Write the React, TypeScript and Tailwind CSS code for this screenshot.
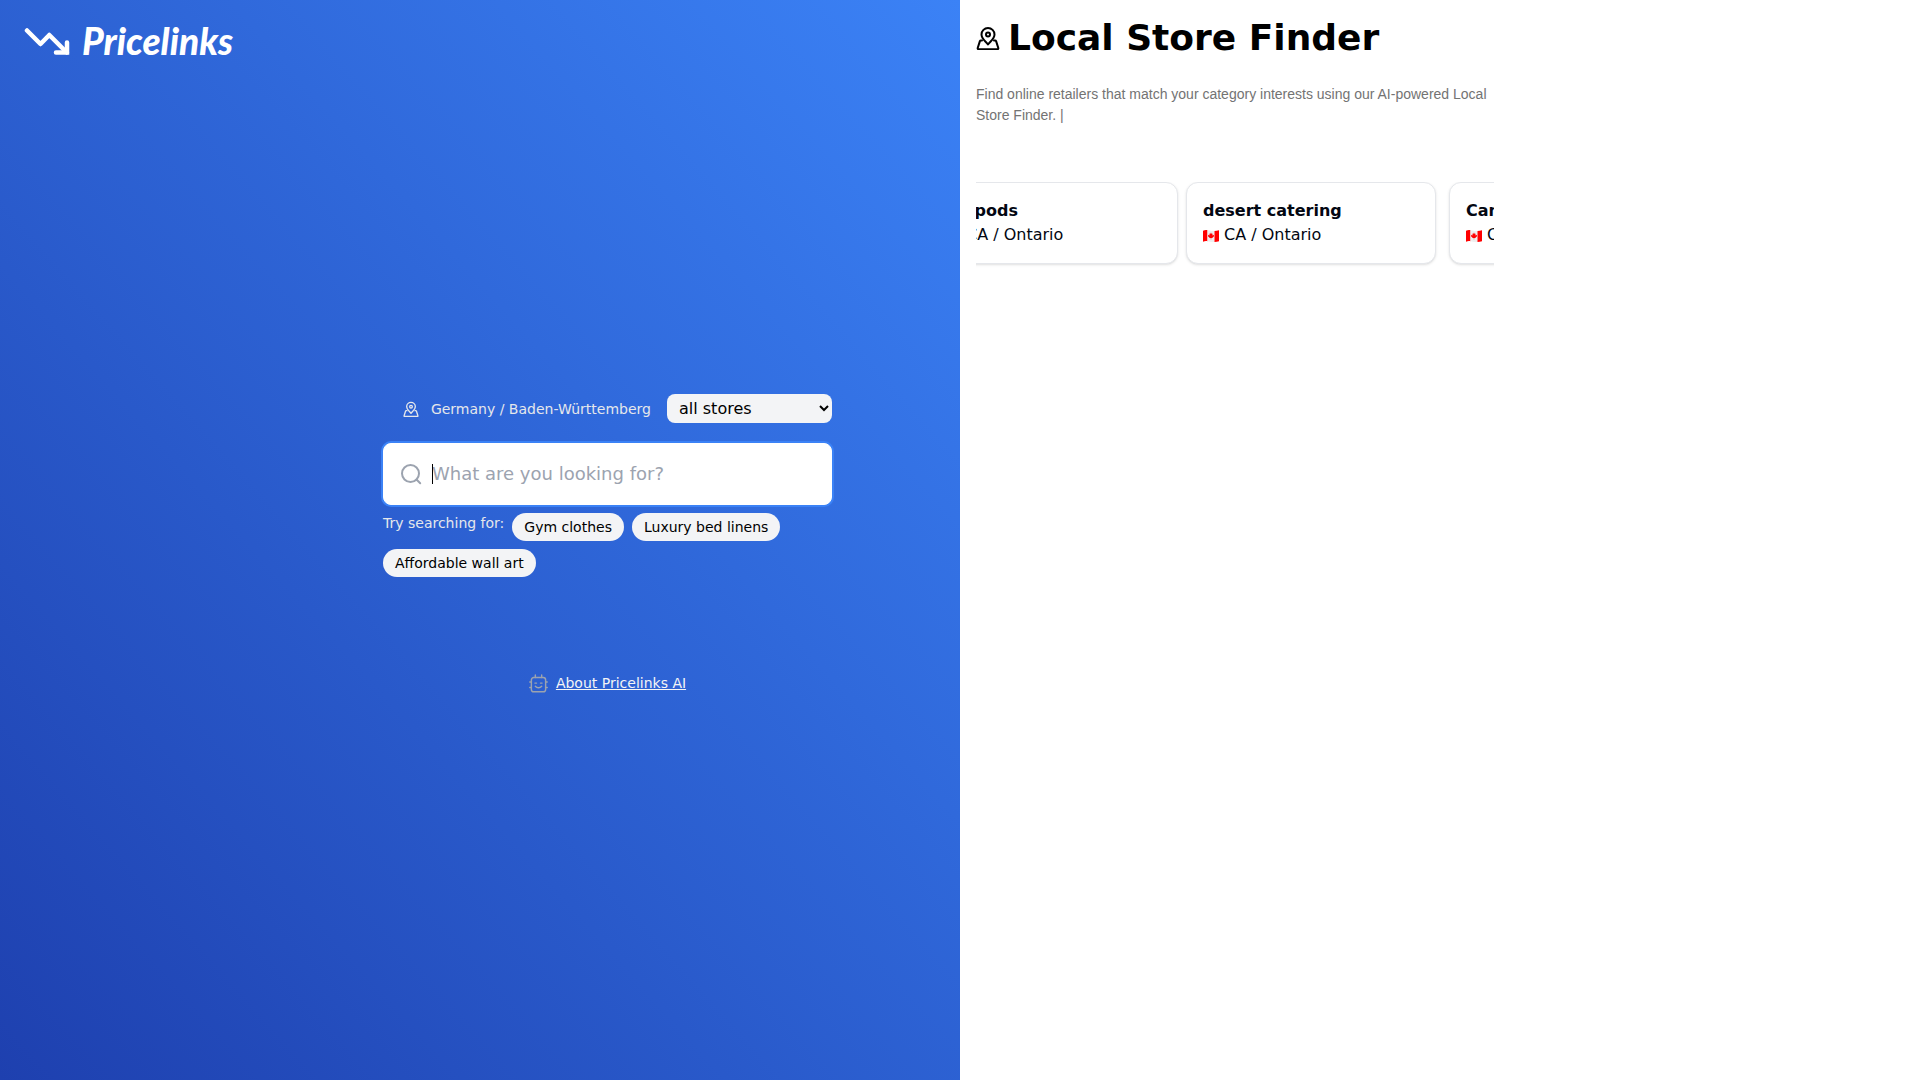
import { useState } from 'react';

interface Store {
  name: string;
  location: string;
  spacing: string;
}

const suggestions = ['Gym clothes', 'Luxury bed linens', 'Affordable wall art'];

const stores: Store[] = [
  { name: 'Earpods', location: 'CA / Ontario', spacing: 'mr-2' },
  { name: 'desert catering', location: 'CA / Ontario', spacing: 'mr-[13px]' },
  { name: 'Canada Goods', location: 'CA / Ontario', spacing: '' },
];

function MapPinIcon({ className }: { className: string }) {
  return (
    <svg
      viewBox="0 0 24 24"
      fill="none"
      stroke="currentColor"
      strokeWidth="2"
      strokeLinecap="round"
      strokeLinejoin="round"
      className={className}
      aria-hidden="true"
    >
      <path d="M12 18.500c-2-3-6.500-5.500-6.500-10a6.500 6.500 0 0 1 13 0c0 4.500-4.500 7-6.500 10z" />
      <circle cx="12" cy="8.500" r="2" />
      <path d="M6 14.500H4.800a1 1 0 0 0-.9.6L1.700 22a1 1 0 0 0 .9 1.300h18.800a1 1 0 0 0 .9-1.300l-2.200-6.900a1 1 0 0 0-.9-.6H18" />
    </svg>
  );
}

function SearchIcon({ className }: { className: string }) {
  return (
    <svg
      viewBox="0 0 24 24"
      fill="none"
      stroke="currentColor"
      strokeWidth="2"
      strokeLinecap="round"
      className={className}
      aria-hidden="true"
    >
      <circle cx="10.5" cy="11.5" r="8.5" />
      <path d="M16.500 17.500l3.700 3.700" />
    </svg>
  );
}

function RobotIcon({ className }: { className: string }) {
  return (
    <svg
      viewBox="0 0 24 24"
      fill="none"
      stroke="currentColor"
      strokeWidth="1.8"
      strokeLinecap="round"
      strokeLinejoin="round"
      className={className}
      aria-hidden="true"
    >
      <rect x="3" y="4.5" width="18" height="18" rx="3" />
      <path d="M8 4.500V1.200M16 4.500V1.200M3 10H1M3 17H1M21 10h2M21 17h2" />
      <path d="M7.500 11.500h2M14.500 11.500h2M8 15.500c2 2.500 6 2.500 8 0" />
    </svg>
  );
}

function CanadaFlag() {
  return (
    <svg viewBox="0 0 16 12" className="mt-0.5 h-3 w-4" role="img" aria-label="Canada">
      <path d="M0 .8C2 0 3 0 4.500 .3v11C3 11 2 11 0 11.800z" fill="#f00" />
      <path d="M4.500 .3c3 .5 4.500 1 7 .7v11c-2.500.3-4-.2-7-.7z" fill="#eee" />
      <path d="M11.500 1c1.500-.1 3-.5 4.500-.8v11c-1.500.4-3 .7-4.500.8z" fill="#f00" />
      <path
        d="M8 2.500l.8 1.400.8-.3-.2 1.800 1.300-.6.300 1.500-1.800 1.700H8.200v1.500h-.4V8H6.800L5 6.300l.3-1.500 1.300.6-.2-1.800.8.3z"
        fill="#f00"
      />
    </svg>
  );
}

function Logo() {
  return (
    <a href="/" className="flex items-center gap-3 text-white">
      <svg
        viewBox="0 0 46 28"
        fill="none"
        stroke="currentColor"
        strokeWidth="4.5"
        strokeLinecap="round"
        strokeLinejoin="round"
        className="h-7 w-[46px]"
        aria-hidden="true"
      >
        <path d="M3 3.500l13.500 13.500 8.800-9 17.500 17.500" />
        <path d="M43 15.500v10H32" strokeLinejoin="miter" />
      </svg>
      <span className="font-['Lato',sans-serif] text-[37px] leading-10 font-black italic">Pricelinks</span>
    </a>
  );
}

function StoreCard({ store }: { store: Store }) {
  return (
    <article
      className={`w-[250px] shrink-0 rounded-xl border border-gray-200 bg-white p-4 text-gray-950 shadow-sm ${store.spacing}`}
    >
      <h2 className="font-bold">{store.name}</h2>
      <p className="flex items-center gap-[5px]">
        <CanadaFlag />
        {store.location}
      </p>
    </article>
  );
}

export default function App() {
  const [query, setQuery] = useState('');
  const [scope, setScope] = useState('all');

  return (
    <div className="grid min-h-screen grid-cols-2 bg-white font-['DejaVu_Sans',sans-serif] text-base">
      <section className="flex flex-col bg-linear-to-tr/srgb from-[#1e40af] to-[#3b82f6]">
        <header className="flex px-6 pt-[21px]">
          <Logo />
        </header>

        <main className="flex flex-1 flex-col items-end justify-center pr-32 pb-[54px]">
          <form className="w-[449px]" onSubmit={(e) => e.preventDefault()}>
            <div className="flex items-center justify-end gap-4">
              <div className="flex items-center gap-3 text-sm text-gray-200">
                <MapPinIcon className="size-4" />
                <span>Germany / Baden-Württemberg</span>
              </div>
              <select
                aria-label="Stores"
                value={scope}
                onChange={(e) => setScope(e.target.value)}
                className="h-[29px] w-[165px] rounded-lg bg-gray-100 px-2 text-black"
              >
                <option value="all">all stores</option>
                <option value="local">local stores</option>
              </select>
            </div>

            <label className="mt-5 flex items-center gap-2 rounded-lg border border-white bg-white p-4 ring-2 ring-[#3b82f6]">
              <SearchIcon className="size-6 shrink-0 text-[#9ca3af]" />
              <span className="relative flex-1">
                {query === '' && <span className="absolute top-1 left-0 h-5 w-px bg-black" />}
                <input
                  type="text"
                  autoFocus
                  aria-label="Search"
                  placeholder="What are you looking for?"
                  value={query}
                  onChange={(e) => setQuery(e.target.value)}
                  className="w-full text-lg text-black outline-none placeholder:text-[#9ca3af]"
                />
              </span>
            </label>

            <div className="mt-2 flex flex-wrap items-start gap-2 text-sm">
              <span className="text-gray-200">Try searching for:</span>
              {suggestions.map((item) => (
                <button
                  key={item}
                  type="button"
                  onClick={() => setQuery(item)}
                  className="rounded-full bg-gray-100 px-3 py-1 text-black"
                >
                  {item}
                </button>
              ))}
            </div>

            <div className="mt-24 flex items-center justify-center gap-2 text-sm">
              <RobotIcon className="size-[19px] text-[#9ca3af]" />
              <a href="/about" className="text-gray-100 underline">
                About Pricelinks AI
              </a>
            </div>
          </form>
        </main>
      </section>

      <section className="p-4">
        <div className="max-w-[518px]">
          <div className="flex items-baseline gap-2 text-black">
            <MapPinIcon className="size-6" />
            <h1 className="text-4xl leading-[44px] font-bold">Local Store Finder</h1>
          </div>
          <p className="mt-6 font-['Liberation_Sans',sans-serif] text-sm leading-[21px] text-[#737373]">
            Find online retailers that match your category interests using our AI-powered Local Store Finder. |
          </p>
          <div className="mt-14 overflow-hidden pb-2">
            <div className="-ml-12 flex">
              {stores.map((store) => (
                <StoreCard key={store.name} store={store} />
              ))}
            </div>
          </div>
        </div>
      </section>
    </div>
  );
}
